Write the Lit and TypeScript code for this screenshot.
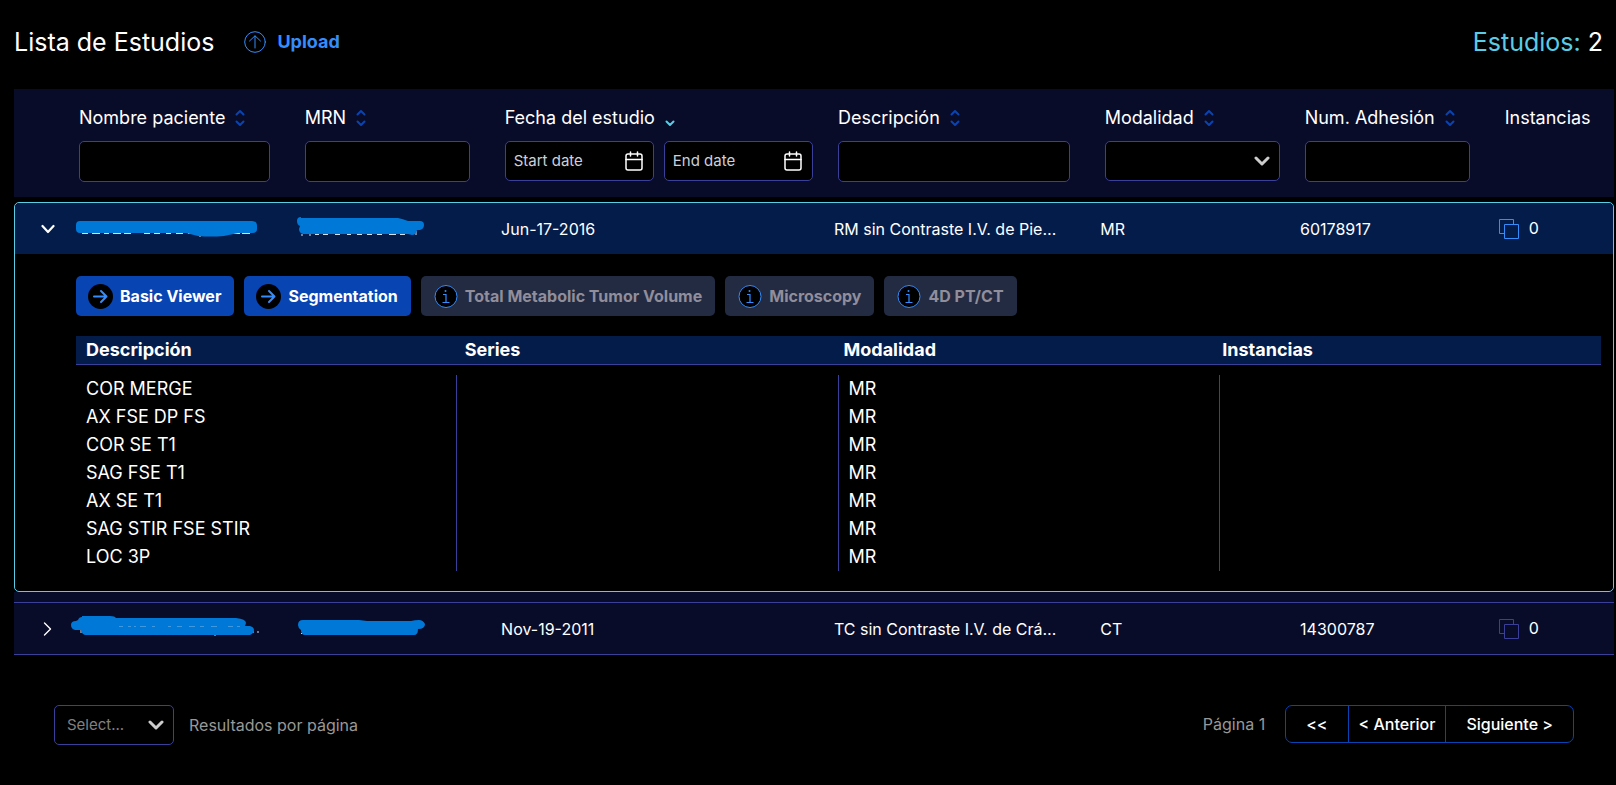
import { LitElement, html, svg, css, nothing } from "lit";
import { customElement, property, state } from "lit/decorators.js";

interface Column {
  id: string;
  label: string;
  span: number;
  kind: "text" | "dates" | "select" | "none";
  sort: "both" | "down" | "none";
}

interface Study {
  id: string;
  name: unknown;
  mrn: unknown;
  date: string;
  description: string;
  modality: string;
  accession: string;
  instances: number;
  series: { description: string; modality: string }[];
}

const columns: Column[] = [
  { id: "name", label: "Nombre paciente", span: 4, kind: "text", sort: "both" },
  { id: "mrn", label: "MRN", span: 3, kind: "text", sort: "both" },
  { id: "date", label: "Fecha del estudio", span: 5, kind: "dates", sort: "down" },
  { id: "description", label: "Descripción", span: 4, kind: "text", sort: "both" },
  { id: "modality", label: "Modalidad", span: 3, kind: "select", sort: "both" },
  { id: "accession", label: "Num. Adhesión", span: 3, kind: "text", sort: "both" },
  { id: "instances", label: "Instancias", span: 2, kind: "none", sort: "none" },
];

const mark = (body: unknown) => html`
  <svg class="mark" width="182" height="25" viewBox="0 0 182 25" role="img" aria-label="Dato oculto">${body}</svg>
`;

const studies: Study[] = [
  {
    id: "s1",
    name: mark(svg`
      <path class="speck" d="M6 17.500h6M16 17.500h8M28 17.500h5M37 17.500h8M48 17.500h7M68 17.500h6M78 17.500h6M90 17.500h5M100 17.500h7M112 17.500h3M156 17.500h8M166 17.500h8M124 19v2"/>
      <path class="ink" d="M4 5H176q5 0 5 5v3q0 4-5 4h-14l-14 3q-14 1-26 0l-12-3H4q-4 0-4-4v-4q0-4 4-4z"/>`),
    mrn: mark(svg`
      <path class="speck" d="M0 19h2M8 19h2M14 18.500h4M22 18.500h5M34 18.500h5M46 18.500h4M56 18.500h5M66 18.500h5M76 18.500h5M88 18.500h7M99 18.500h5M115 15v4"/>
      <path class="ink" d="M0 2H97q5 1 10 3h12q4 0 4 4t-4 5h-3q-1 5-5 5l-4-1H2q-4-1-4-5l1-3q-3-1-3-5t4-4z"/>`),
    date: "Jun-17-2016",
    description: "RM sin Contraste I.V. de Pierna",
    modality: "MR",
    accession: "60178917",
    instances: 0,
    series: [
      { description: "COR MERGE", modality: "MR" },
      { description: "AX FSE DP FS", modality: "MR" },
      { description: "COR SE T1", modality: "MR" },
      { description: "SAG FSE T1", modality: "MR" },
      { description: "AX SE T1", modality: "MR" },
      { description: "SAG STIR FSE STIR", modality: "MR" },
      { description: "LOC 3P", modality: "MR" },
    ],
  },
  {
    id: "s2",
    name: mark(svg`
      <path class="speck" d="M5 13v4M139 17v3M176 16h2M181 16h2"/>
      <path class="ink" d="M6 0H34q5 0 6 2H160q10 1 10 5l-1 3h5q4 1 4 4t-4 5H10q-4 0-5-5H-1q-4-1-4-5t5-4l2-1q1-3 4-3z"/>
      <path class="speck faint" d="M43 10.500h4M52 10.500h3M58 10.500h2M64 10.500h6M76 10.500h3M92 10.500h3M101 10.500h5M113 10.500h6M124 10.500h4M135 10.500h6M152 10.500h5M161 10.500h3"/>`),
    mrn: mark(svg`
      <path class="speck" d="M0 17.500h2M28 18.500h2M38 18.500h2M60 18.500h2M88 18.500h2"/>
      <path class="ink" d="M2 4H58l8 1h44q4-1 8-1t6 4q0 5-7 5 0 6-4 6H4q-4 0-4-5-3-2-3-5 0-5 5-5z"/>`),
    date: "Nov-19-2011",
    description: "TC sin Contraste I.V. de Cráneo",
    modality: "CT",
    accession: "14300787",
    instances: 0,
    series: [],
  },
];

const modes = [
  { label: "Basic Viewer", enabled: true },
  { label: "Segmentation", enabled: true },
  { label: "Total Metabolic Tumor Volume", enabled: false },
  { label: "Microscopy", enabled: false },
  { label: "4D PT/CT", enabled: false },
];

const caret = html`
  <svg class="caret" width="16" height="10" viewBox="0 0 16 10" aria-hidden="true">
    <path d="M2 2l6 6 6-6" fill="none" stroke="#ccc" stroke-width="3" stroke-linecap="round" stroke-linejoin="round"/>
  </svg>`;

const calendar = html`
  <svg width="18" height="20" viewBox="0 0 18 20" fill="none" stroke="#fff" stroke-width="1.500" stroke-linecap="round" aria-hidden="true">
    <rect x="1" y="3" width="16" height="16" rx="2"/>
    <path d="M1 8.500h16M5.500 1v4M12.500 1v4"/>
  </svg>`;

const shared = css`
  * { box-sizing: border-box; }
  button, input, select { font: inherit; color: inherit; margin: 0; padding: 0; border: 0; background: none; }
  button { cursor: pointer; }
  svg { display: block; flex: none; }
  table, thead, tbody { display: block; }
  th { font-weight: 400; text-align: left; padding: 0; }
  td { padding: 0; }
`;

@customElement("study-filters")
class StudyFilters extends LitElement {
  static styles = [shared, css`
    :host { display: block; background: #090c29; padding: 17px 0 15px; }
    .row { display: grid; grid-template-columns: repeat(24, minmax(0, 1fr)); }
    .cell { padding: 0 11px 0 24px; }
    .name { grid-column: span 4; padding-left: 65px; }
    .span-2 { grid-column: span 2; }
    .span-3 { grid-column: span 3; }
    .span-4 { grid-column: span 4; }
    .span-5 { grid-column: span 5; }
    .dates, .select { padding-right: 1px; }
    .none { padding-right: 0; }
    .head { display: flex; align-items: center; gap: 10px; height: 24px; font-size: 18px; line-height: 24px; white-space: nowrap; margin-bottom: 11px; }
    .field { display: block; width: 100%; height: 41px; border: 1px solid #3a3f99; border-radius: 5px; background: #000; padding: 0 10px; }
    .pair { display: grid; grid-template-columns: repeat(2, minmax(0, 1fr)); gap: 10px; }
    .date { display: flex; align-items: center; height: 40px; border: 1px solid #3a3f99; border-radius: 5px; background: #000; padding: 0 10px 0 8px; }
    .date input { flex: 1; min-width: 0; font-size: 15px; }
    .date input::placeholder { color: #cbd0dc; opacity: 1; }
    .pick { display: grid; align-items: center; }
    .pick > * { grid-area: 1 / 1; }
    .pick .caret { justify-self: end; margin-right: 10px; pointer-events: none; }
    .pick select { appearance: none; width: 100%; height: 40px; border: 1px solid #3a3f99; border-radius: 5px; background: #000; padding: 0 32px 0 12px; }
  `];

  private sortIcon(c: Column) {
    if (c.sort === "none") return nothing;
    const down = c.sort === "down";
    return html`
      <button type="button" aria-label="Ordenar por ${c.label}">
        <svg width="10" height="18" viewBox="0 0 10 18" fill="none" stroke=${down ? "#5acce6" : "#0944b3"} stroke-width="2" stroke-linecap="round" stroke-linejoin="round" aria-hidden="true">
          ${down
            ? svg`<path d="M1.500 12.500L5 16l3.500-3.500"/>`
            : svg`<path d="M1.500 5.500L5 2l3.500 3.500M1.500 12.500L5 16l3.500-3.500"/>`}
        </svg>
      </button>`;
  }

  private control(c: Column) {
    switch (c.kind) {
      case "text":
        return html`<input class="field" id=${c.id} type="text">`;
      case "select":
        return html`<div class="pick"><select id=${c.id}><option></option><option>CT</option><option>MR</option></select>${caret}</div>`;
      case "dates":
        return html`
          <div class="pair">
            <div class="date"><input id=${c.id} type="text" placeholder="Start date" aria-label="Start date"><button type="button" aria-label="Start date">${calendar}</button></div>
            <div class="date"><input type="text" placeholder="End date" aria-label="End date"><button type="button" aria-label="End date">${calendar}</button></div>
          </div>`;
      default:
        return nothing;
    }
  }

  render() {
    return html`
      <div class="row">
        ${columns.map((c) => html`
          <div class="cell ${c.id === "name" ? "name" : `span-${c.span}`} ${c.kind}">
            <div class="head">
              ${c.kind === "none" ? html`<span>${c.label}</span>` : html`<label for=${c.id}>${c.label}</label>`}
              ${this.sortIcon(c)}
            </div>
            ${this.control(c)}
          </div>`)}
      </div>`;
  }
}

@customElement("study-details")
class StudyDetails extends LitElement {
  @property({ attribute: false }) series: Study["series"] = [];

  static styles = [shared, css`
    :host { display: block; background: #000; padding: 22px 12px 20px 61px; border-radius: 0 0 5px 5px; }
    .modes { display: flex; flex-wrap: wrap; gap: 10px; margin-bottom: 20px; }
    .mode { display: flex; align-items: center; gap: 7px; height: 40px; padding: 0 13px 0 12px; border-radius: 5px; background: #0944b3; color: #fff; font-size: 16px; font-weight: 700; white-space: nowrap; }
    .mode:disabled { background: #232b42; color: #918e9b; cursor: default; }
    .headings { display: grid; grid-template-columns: repeat(4, 1fr); height: 29px; padding-left: 10px; background: #041c4a; border-bottom: 1px solid #3a3f99; font-size: 18px; line-height: 28px; }
    .headings th { font-weight: 700; }
    .lines { padding-top: 10px; font-size: 18px; line-height: 28px; }
    .line { display: grid; grid-template-columns: repeat(4, 1fr); }
    .line td { height: 28px; padding-left: 10px; border-right: 1px solid #3a3f99; }
    .line td:last-child { border-right: 0; }
  `];

  private icon(enabled: boolean) {
    return enabled
      ? html`<svg width="25" height="25" viewBox="0 0 25 25" aria-hidden="true"><circle cx="12.500" cy="12.500" r="12.500" fill="#000"/><path d="M6 12.500h12.500M13 7l5.500 5.500L13 18" fill="none" stroke="#348cfd" stroke-width="2" stroke-linecap="round" stroke-linejoin="round"/></svg>`
      : html`<svg width="25" height="25" viewBox="0 0 25 25" aria-hidden="true"><circle cx="13" cy="12.500" r="11" fill="#000" stroke="#348cfd"/><path d="M10 10.500h3v8M9.500 18.500h7" fill="none" stroke="#348cfd" stroke-width="1.200"/><circle cx="12.500" cy="7" r="1" fill="#348cfd"/></svg>`;
  }

  render() {
    return html`
      <div class="modes">
        ${modes.map((m) => html`<button class="mode" type="button" ?disabled=${!m.enabled}>${this.icon(m.enabled)}${m.label}</button>`)}
      </div>
      <table>
        <thead>
          <tr class="headings"><th scope="col">Descripción</th><th scope="col">Series</th><th scope="col">Modalidad</th><th scope="col">Instancias</th></tr>
        </thead>
        <tbody class="lines">
          ${this.series.map((s) => html`<tr class="line"><td>${s.description}</td><td></td><td>${s.modality}</td><td></td></tr>`)}
        </tbody>
      </table>`;
  }
}

@customElement("app-root")
class AppRoot extends LitElement {
  @state() private open = "s1";

  static styles = [shared, css`
    :host { display: block; box-sizing: border-box; min-height: 100vh; background: #000; color: #fff; font-family: Inter, "Liberation Sans", sans-serif; font-size: 16px; line-height: 24px; padding: 0 2px 32px 14px; }
    .top { display: flex; align-items: center; height: 89px; padding: 0 11px 5px 0; }
    .title { margin: 0; font-size: 25px; line-height: 32px; font-weight: 400; }
    .upload { display: flex; align-items: center; gap: 11px; margin-left: 30px; color: #348cfd; font-size: 18px; font-weight: 700; }
    .count { margin-left: auto; font-size: 25px; line-height: 32px; font-weight: 400; color: #5acce6; }
    .count b { font-weight: 400; color: #fff; }
    .studies { padding-top: 5px; }
    .study { background: #090c29; border: 1px solid #3a3f99; border-width: 1px 0; padding: 0 1px; }
    .open { border: 1px solid #5acce6; border-radius: 5px; padding: 0; }
    .gap { height: 10px; background: #090c29; }
    .row { display: grid; grid-template-columns: repeat(24, minmax(0, 1fr)); align-items: center; height: 51px; }
    .open .row { background: #041c4a; border-radius: 5px 5px 0 0; }
    .cell { grid-column: span 3; padding: 0 20px; white-space: nowrap; overflow: hidden; text-overflow: ellipsis; }
    .name { grid-column: span 4; display: flex; align-items: center; padding: 0; overflow: visible; }
    .toggle { display: flex; justify-content: center; width: 61px; padding-left: 4px; flex: none; }
    .mrn { overflow: visible; }
    .date { grid-column: span 5; }
    .description { grid-column: span 4; }
    .instances { grid-column: span 2; display: flex; align-items: center; gap: 10px; padding: 0 0 0 19px; }
    .instances span { padding-bottom: 2px; }
    .stack { stroke: #3a3f99; }
    .open .stack { stroke: #348cfd; }
    .detail td { display: block; }
    .detail { display: block; }
    .mark { overflow: visible; }
    .ink { fill: #0078d7; }
    .speck { stroke: #d8e0ee; stroke-width: 1; fill: none; }
    .faint { stroke: #5ba6e2; stroke-opacity: 0.7; }
    .bottom { display: flex; align-items: flex-start; justify-content: space-between; padding: 50px 40px 0; color: #989898; }
    .size { display: flex; align-items: center; gap: 15px; }
    .pick { display: grid; align-items: center; width: 120px; }
    .pick > * { grid-area: 1 / 1; }
    .pick .caret { justify-self: end; margin-right: 10px; pointer-events: none; }
    .pick select { appearance: none; width: 100%; height: 40px; border: 1px solid #3a3f99; border-radius: 5px; background: #000; color: #808080; font-size: 15px; padding: 0 32px 0 12px; }
    .pages { display: flex; align-items: center; gap: 20px; }
    .group { display: flex; height: 38px; border: 1px solid #0944b3; border-radius: 7px; color: #fff; font-weight: 500; }
    .group button { padding: 0 10px; }
    .group button + button { border-left: 1px solid #0944b3; }
    .group .wide { padding: 0 20px; }
  `];

  private study(s: Study, i: number) {
    const open = this.open === s.id;
    return html`
      ${i ? html`<tbody class="gap" aria-hidden="true"></tbody>` : nothing}
      <tbody class="study ${open ? "open" : ""}">
        <tr class="row">
          <td class="cell name">
            <button class="toggle" type="button" aria-expanded=${open ? "true" : "false"} aria-label="Mostrar series" @click=${() => (this.open = open ? "" : s.id)}>
              ${open
                ? html`<svg width="14" height="14" viewBox="0 0 14 14" fill="none" stroke="#fff" stroke-width="2.200" stroke-linecap="round" stroke-linejoin="round"><path d="M1.500 4L7 10l5.500-6"/></svg>`
                : html`<svg width="14" height="14" viewBox="0 0 14 14" fill="none" stroke="#fff" stroke-width="1.400" stroke-linecap="round" stroke-linejoin="round"><path d="M3.500 1l6 6-6 6"/></svg>`}
            </button>
            ${s.name}
          </td>
          <td class="cell mrn">${s.mrn}</td>
          <td class="cell date">${s.date}</td>
          <td class="cell description">${s.description}</td>
          <td class="cell">${s.modality}</td>
          <td class="cell">${s.accession}</td>
          <td class="cell instances">
            <svg class="stack" width="20" height="20" viewBox="0 0 20 20" fill="none" aria-hidden="true"><path d="M5.500 14.500h-5v-14h14v5M5.500 5.500h14v14h-14z"/></svg>
            <span>${s.instances}</span>
          </td>
        </tr>
        ${open ? html`<tr class="detail"><td colspan="7"><study-details .series=${s.series}></study-details></td></tr>` : nothing}
      </tbody>`;
  }

  render() {
    return html`
      <header class="top">
        <h1 class="title">Lista de Estudios</h1>
        <button class="upload" type="button">
          <svg width="22" height="22" viewBox="0 0 22 22" fill="none" stroke="#348cfd" stroke-linecap="round" stroke-linejoin="round" aria-hidden="true"><circle cx="11" cy="11" r="10.300"/><path d="M11 17V5M5.500 10L11 4.800l5.500 5.200"/></svg>
          Upload
        </button>
        <div class="count">Estudios: <b>2</b></div>
      </header>
      <study-filters></study-filters>
      <table class="studies">${studies.map((s, i) => this.study(s, i))}</table>
      <footer class="bottom">
        <div class="size">
          <div class="pick">
            <select id="size"><option>Select...</option><option>25</option><option>50</option><option>100</option></select>
            ${caret}
          </div>
          <label for="size">Resultados por página</label>
        </div>
        <nav class="pages" aria-label="Paginación">
          <span>Página 1</span>
          <div class="group">
            <button class="wide" type="button">&lt;&lt;</button>
            <button type="button">&lt; Anterior</button>
            <button class="wide" type="button">Siguiente &gt;</button>
          </div>
        </nav>
      </footer>`;
  }
}
